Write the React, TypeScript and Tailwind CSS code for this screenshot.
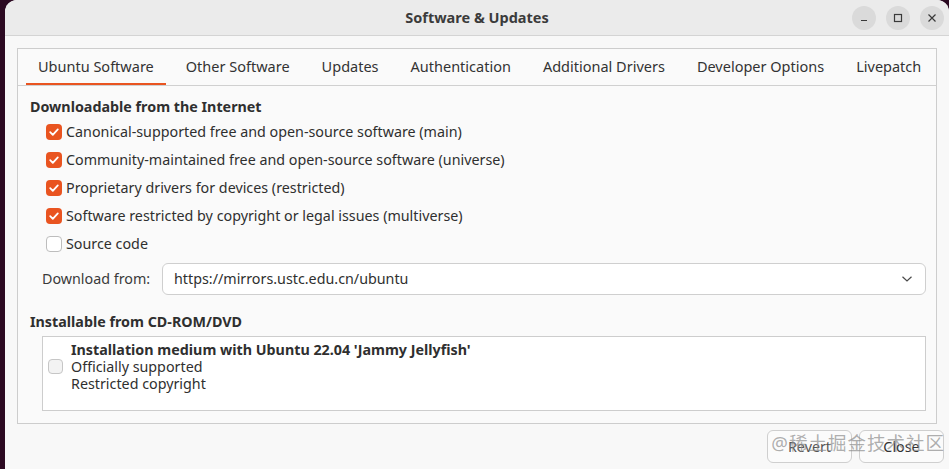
import React from "react";

const font = { fontFamily: '"Noto Sans", "Noto Sans CJK SC", sans-serif' };

function Check({ checked }: { checked: boolean }) {
  if (checked) {
    return (
      <span className="flex h-[16px] w-[16px] items-center justify-center rounded-[4px] bg-[#e95420]">
        <svg width="12" height="12" viewBox="0 0 12 12" fill="none">
          <path d="M2.2 6.2 L4.8 8.8 L9.8 3.4" stroke="#fff" strokeWidth="1.8" strokeLinecap="round" strokeLinejoin="round" />
        </svg>
      </span>
    );
  }
  return <span className="h-[16px] w-[16px] rounded-[4px] border border-[#bdbdbd] bg-white" />;
}

const tabs = [
  "Ubuntu Software",
  "Other Software",
  "Updates",
  "Authentication",
  "Additional Drivers",
  "Developer Options",
  "Livepatch",
];

const sources = [
  { label: "Canonical-supported free and open-source software (main)", on: true },
  { label: "Community-maintained free and open-source software (universe)", on: true },
  { label: "Proprietary drivers for devices (restricted)", on: true },
  { label: "Software restricted by copyright or legal issues (multiverse)", on: true },
  { label: "Source code", on: false },
];

export default function App() {
  return (
    <div className="flex h-[469px] w-[949px] overflow-hidden bg-[#2c0a22] text-[#2f2f2f]" style={font}>
      <div className="w-[5px] shrink-0" />
      <div className="relative flex flex-1 flex-col overflow-hidden rounded-t-[12px] bg-[#f8f8f8]">
        {/* header bar */}
        <div className="relative flex h-[36px] shrink-0 items-center justify-center border-b border-[#d4d4d4] bg-[#ebebeb]">
          <span className="text-[14.5px] font-bold text-[#3b3b3b]">Software &amp; Updates</span>
          <div className="absolute right-[5px] top-[6px] flex gap-[10px]">
            <span className="flex h-[24px] w-[24px] items-center justify-center rounded-full bg-[#dadada]">
              <svg width="10" height="10" viewBox="0 0 10 10">
                <path d="M2 7.5 H8" stroke="#3a3a3a" strokeWidth="1.2" />
              </svg>
            </span>
            <span className="flex h-[24px] w-[24px] items-center justify-center rounded-full bg-[#dadada]">
              <svg width="10" height="10" viewBox="0 0 10 10">
                <rect x="1.5" y="1.5" width="7" height="7" fill="none" stroke="#3a3a3a" strokeWidth="1.2" />
              </svg>
            </span>
            <span className="flex h-[24px] w-[24px] items-center justify-center rounded-full bg-[#dadada]">
              <svg width="10" height="10" viewBox="0 0 10 10">
                <path d="M1.5 1.5 L8.5 8.5 M8.5 1.5 L1.5 8.5" stroke="#3a3a3a" strokeWidth="1.2" />
              </svg>
            </span>
          </div>
        </div>

        <div className="flex flex-1 flex-col pl-[12px] pr-[12px] pt-[12px]">
          <div className="flex h-[376px] flex-col border border-[#cdcdcd] bg-[#fafafa]">
            {/* tabs */}
            <div className="flex h-[37px] shrink-0 overflow-hidden border-b border-[#d0d0d0] pl-[4px]">
              {tabs.map((t, i) => (
                <div
                  key={t}
                  className="relative mx-[4px] flex shrink-0 items-center whitespace-nowrap px-[12px] text-[14.5px] text-[#333]"
                >
                  {t}
                  {i === 0 && <span className="absolute bottom-[-1px] left-0 right-0 h-[3px] bg-[#e95420]" />}
                </div>
              ))}
            </div>

            <div className="flex flex-col pl-[12px] pr-[10px] pt-[11px]">
              <div className="h-[20px] text-[14.3px] font-bold leading-[20px]">Downloadable from the Internet</div>
              <div className="mt-[1px] flex flex-col pl-[16px]">
                {sources.map((s) => (
                  <div key={s.label} className="flex h-[28px] items-center gap-[4px] text-[14.3px]">
                    <Check checked={s.on} />
                    <span>{s.label}</span>
                  </div>
                ))}
              </div>

              <div className="mt-[5px] flex items-center pl-[12px]">
                <span className="w-[120px] text-[14.3px] text-[#3a3a3a]">Download from:</span>
                <div className="flex h-[32px] flex-1 items-center justify-between rounded-[6px] border border-[#cfcfcf] bg-white pl-[11px] pr-[12px] text-[14.3px]">
                  <span>https://mirrors.ustc.edu.cn/ubuntu</span>
                  <svg width="12" height="8" viewBox="0 0 12 8" fill="none">
                    <path d="M1.5 1.8 L6 6 L10.5 1.8" stroke="#4a4a4a" strokeWidth="1.2" />
                  </svg>
                </div>
              </div>

              <div className="mt-[17px] h-[20px] text-[14.3px] font-bold leading-[20px]">Installable from CD-ROM/DVD</div>
              <div className="ml-[12px] mt-[4px] h-[75px] border border-[#cdcdcd] bg-white pt-[4px]">
                <div className="flex items-center gap-[8px] pl-[5px]">
                  <span className="h-[15px] w-[15px] rounded-[4px] border border-[#c6c6c6] bg-[#f3f3f3]" />
                  <div className="flex flex-col text-[14.3px] leading-[17px]">
                    <span className="font-bold">Installation medium with Ubuntu 22.04 'Jammy Jellyfish'</span>
                    <span>Officially supported</span>
                    <span>Restricted copyright</span>
                  </div>
                </div>
              </div>
            </div>
          </div>

          <div className="mr-[-7px] mt-[6px] flex justify-end gap-[7px]">
            <button className="h-[33px] w-[85px] rounded-[6px] border border-[#cfcfcf] bg-[#fbfbfb] text-[14.3px] text-[#555]">
              Revert
            </button>
            <button className="h-[33px] w-[85px] rounded-[6px] border border-[#cfcfcf] bg-[#fbfbfb] text-[14.3px] text-[#333]">
              Close
            </button>
          </div>
        </div>

        <span className="pointer-events-none absolute bottom-[12px] right-[4px] text-[18.5px] tracking-[1px] text-[#8c8c8c]/70">
          @稀土掘金技术社区
        </span>
      </div>
    </div>
  );
}
